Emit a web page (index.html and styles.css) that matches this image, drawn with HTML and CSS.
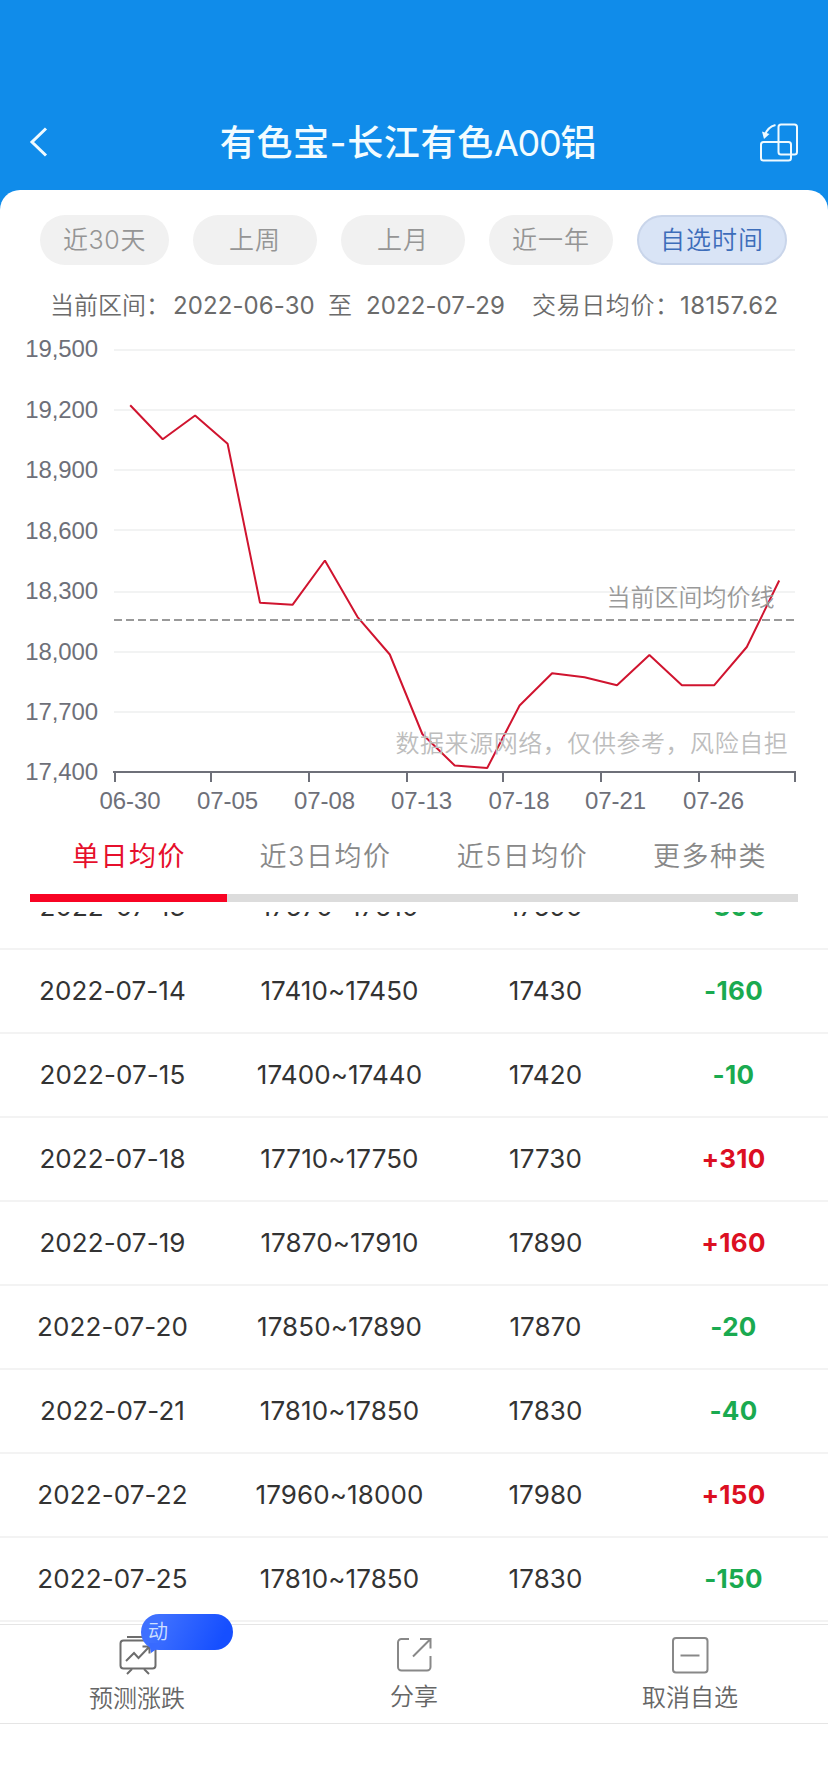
FILE: index.html
```html
<!DOCTYPE html>
<html lang="zh-CN">
<head>
<meta charset="utf-8">
<title>有色宝-长江有色A00铝</title>
<link rel="stylesheet" href="styles.css">
</head>
<body>
<header class="header">
  <svg class="back" width="24" height="34" viewBox="0 0 24 34"><path d="M19 3.500L5 17l14 13.500"/></svg>
  <h1 class="title">有色宝-长江有色<span class="code">A00</span>铝</h1>
  <svg class="rotate" width="42" height="42" viewBox="0 0 42 42"><rect x="20.500" y="2.500" width="18.500" height="30" rx="2.500"/><rect x="3" y="20" width="30" height="18.500" rx="2.500"/><path d="M17.500 3C12 4.500 8.500 8 7 13"/><path class="solid" d="M4 9.500l7.500 2.500L6 17z"/></svg>
</header>
<main class="card">
  <nav class="ranges">
    <button class="pill pill-first">近30天</button>
    <button class="pill">上周</button>
    <button class="pill">上月</button>
    <button class="pill">近一年</button>
    <button class="pill pill-active">自选时间</button>
  </nav>
  <div class="summary">
    <span class="s-label">当前区间：</span><span class="s-date">2022-06-30</span><span class="s-to">至</span><span class="s-date">2022-07-29</span><span class="s-avg">交易日均价：</span><span class="s-value">18157.62</span>
  </div>
  <svg class="chart" width="828" height="496" viewBox="0 330 828 496">
    <path class="grid" d="M114 350H795M114 410H795M114 470H795M114 530H795M114 592H795M114 652H795M114 712H795"/>
    <g class="ylabels">
      <text x="98" y="357">19,500</text><text x="98" y="417.500">19,200</text><text x="98" y="478">18,900</text><text x="98" y="538.500">18,600</text><text x="98" y="599">18,300</text><text x="98" y="659.500">18,000</text><text x="98" y="720">17,700</text><text x="98" y="780">17,400</text>
    </g>
    <path class="axis" d="M113 772H796M115 772V782M211 772V782M309 772V782M407 772V782M503 772V782M601 772V782M699 772V782M795 772V782"/>
    <g class="xlabels">
      <text x="130" y="809">06-30</text><text x="227.500" y="809">07-05</text><text x="324.500" y="809">07-08</text><text x="421.500" y="809">07-13</text><text x="519" y="809">07-18</text><text x="615.500" y="809">07-21</text><text x="713.500" y="809">07-26</text>
    </g>
    <path class="line" d="M130.200 405.200L162.700 439.300L195.100 415.500L227.600 443.700L260 602.700L292.500 604.800L324.900 560.500L357.400 616.800L389.800 654.500L422.300 734L454.700 765.500L487.200 768L519.600 705.500L552.100 673.200L584.500 677.200L617 685.200L649.400 655L681.900 685.200L714.300 685.200L746.800 647L779.200 580.500"/>
    <path class="average" d="M114 620H795"/>
    <text class="average-label" x="606.500" y="606">当前区间均价线</text>
    <text class="watermark" x="395.500" y="752">数据来源网络，仅供参考，风险自担</text>
  </svg>
  <nav class="tabs">
    <span class="tab tab-active">单日均价</span><span class="tab">近3日均价</span><span class="tab">近5日均价</span><span class="tab tab-last">更多种类</span>
  </nav>
  <div class="track"><div class="track-on"></div></div>
  <section class="list">
    <div class="rows">
      <div class="row"><span>2022-07-13</span><span>17570~17610</span><span>17590</span><b class="down">-390</b></div>
      <div class="row"><span>2022-07-14</span><span>17410~17450</span><span>17430</span><b class="down">-160</b></div>
      <div class="row"><span>2022-07-15</span><span>17400~17440</span><span>17420</span><b class="down">-10</b></div>
      <div class="row"><span>2022-07-18</span><span>17710~17750</span><span>17730</span><b class="up">+310</b></div>
      <div class="row"><span>2022-07-19</span><span>17870~17910</span><span>17890</span><b class="up">+160</b></div>
      <div class="row"><span>2022-07-20</span><span>17850~17890</span><span>17870</span><b class="down">-20</b></div>
      <div class="row"><span>2022-07-21</span><span>17810~17850</span><span>17830</span><b class="down">-40</b></div>
      <div class="row"><span>2022-07-22</span><span>17960~18000</span><span>17980</span><b class="up">+150</b></div>
      <div class="row"><span>2022-07-25</span><span>17810~17850</span><span>17830</span><b class="down">-150</b></div>
    </div>
  </section>
</main>
<footer class="toolbar">
  <div class="tool tool-forecast">
    <svg width="40" height="40" viewBox="0 0 40 40"><path d="M10 2H30"/><rect x="3.500" y="5.500" width="35" height="28" rx="3"/><path d="M9 26l8-8 4.500 5L32 12M25.500 11.500H32.500V18.500M15 34l-5 5M27 34l5 5"/></svg>
    <span>预测涨跌</span>
    <div class="bubble">动</div>
  </div>
  <div class="tool tool-share">
    <svg width="40" height="40" viewBox="0 0 40 40"><path d="M15 4H7.500A3.500 3.500 0 0 0 4 7.500V32A3.500 3.500 0 0 0 7.500 35.500H33A3.500 3.500 0 0 0 36.500 32V21M19 21.500L36 4.500M26 4H36.500V13.500"/></svg>
    <span>分享</span>
  </div>
  <div class="tool tool-remove">
    <svg width="40" height="40" viewBox="0 0 40 40"><rect x="3" y="3" width="34.500" height="34.500" rx="3"/><path d="M10.500 20.500H29.500"/></svg>
    <span>取消自选</span>
  </div>
</footer>
</body>
</html>
```
FILE: styles.css
```css
* { box-sizing: border-box; }
body {
  margin: 0;
  width: 828px;
  height: 1792px;
  overflow: hidden;
  background: #108cea;
  font-family: Inter, "Noto Sans CJK SC", sans-serif;
}
.header {
  height: 190px;
  padding: 96px 28px 0 27px;
  display: flex;
  justify-content: space-between;
  align-items: center;
}
.header svg { fill: none; stroke: #effaff; }
.back { stroke-width: 3; margin-bottom: 3px; }
.rotate { stroke-width: 2; }
.rotate .solid { fill: #effaff; stroke: none; }
.title {
  margin: 0 0 0 8px;
  font-size: 36px;
  line-height: 50px;
  font-weight: 500;
  letter-spacing: 0.7px;
  color: #f2fcff;
}
.code { letter-spacing: -1.2px; font-weight: 400; }
.card {
  height: 1434px;
  background: #fff;
  border-radius: 20px 20px 0 0;
}
.ranges { display: flex; gap: 24px; padding: 25px 40px 0; }
.pill {
  width: 124px;
  height: 50px;
  padding: 0;
  border: 0;
  border-radius: 25px;
  background: #f1f1f1;
  color: #959595;
  font: 350 25px/51px Inter, "Noto Sans CJK SC", sans-serif;
  letter-spacing: 1px;
}
.pill-first { width: 129px; letter-spacing: .6px; }
.pill-active {
  width: 150px;
  border: 2px solid #c9d5ea;
  background: #d9e4f6;
  color: #3d6dba;
  line-height: 47px;
}
.summary {
  display: flex;
  height: 65px;
  padding: 23px 0 0 50px;
  font-size: 24px;
  line-height: 36px;
  font-weight: 350;
  color: #6b6b6b;
  white-space: nowrap;
}
.s-label { width: 123px; }
.s-date { width: 155px; font-weight: 400; letter-spacing: .1px; }
.s-to { width: 38px; }
.s-avg { width: 148px; margin-left: 11px; letter-spacing: .6px; }
.s-value { font-weight: 400; letter-spacing: .4px; }
.chart { display: block; }
.grid { stroke: #f2f3f3; stroke-width: 2; }
.axis { stroke: #6e7079; stroke-width: 2; }
.ylabels, .xlabels { font: 24px "Liberation Sans", sans-serif; fill: #6e7079; }
.ylabels { text-anchor: end; letter-spacing: -.1px; }
.xlabels { text-anchor: middle; letter-spacing: -.1px; }
.line { fill: none; stroke: #d0142f; stroke-width: 2; stroke-linejoin: bevel; }
.average { stroke: #999; stroke-width: 2; stroke-dasharray: 8 4; }
.average-label, .watermark { font: 350 24px "Noto Sans CJK SC", sans-serif; fill: #999; }
.watermark { fill: #bdbdbd; letter-spacing: .55px; }
.tabs {
  display: flex;
  height: 68px;
  padding: 11px 29px 0 31px;
  font-size: 27px;
  line-height: 40px;
  font-weight: 350;
  letter-spacing: 1.5px;
  color: #888;
  text-align: center;
}
.tab { width: 197px; }
.tab-active { width: 196px; color: #e60f2c; font-weight: 400; }
.tab-last { width: 178px; }
.track { height: 8px; margin: 0 30px; background: #dcdcdc; }
.track-on { width: 197px; height: 8px; background: #f80424; }
.list { height: 712px; margin-top: 10px; overflow: hidden; }
.rows { margin-top: -46px; }
.row {
  display: grid;
  grid-template-columns: 225px 229px 183px 193px;
  height: 84px;
  border-bottom: 2px solid #f3f3f3;
  text-align: center;
  font-size: 26px;
  line-height: 82px;
  color: #333;
  letter-spacing: .1px;
}
.row b { font-weight: 700; letter-spacing: .3px; }
.down { color: #1aaa50; }
.up { color: #dc0f22; }
.toolbar {
  height: 168px;
  display: flex;
  background: linear-gradient(#e5e5e5, #e5e5e5) 0 98px / 100% 1px no-repeat, #fff;
  border-top: 1px solid #e5e5e5;
}
.tool {
  position: relative;
  flex: 1;
  display: flex;
  flex-direction: column;
  align-items: center;
  padding-top: 10px;
  font-size: 24px;
  line-height: 36px;
  font-weight: 350;
  color: #666;
}
.tool svg { fill: none; stroke: #888; stroke-width: 2; }
.tool span { margin-top: 4px; }
.tool-forecast svg { stroke: #6d6d6d; margin-right: 2px; }
.tool-forecast span { margin: 6px 2px 0 0; }
.tool-remove span { margin-top: 5px; }
.bubble {
  position: absolute;
  left: 141px;
  top: -11px;
  width: 92px;
  height: 36px;
  padding-left: 7px;
  border-radius: 18px;
  background: linear-gradient(115deg, #3e70ff 20%, #164fff 85%);
  color: #cfe0ff;
  font-size: 20px;
  line-height: 37px;
}
.bubble::after {
  content: "";
  position: absolute;
  left: 8px;
  top: 29px;
  border: solid transparent;
  border-width: 0 14px 10px 2px;
  border-top: 10px solid #386aff;
  border-bottom: 0;
}
```
